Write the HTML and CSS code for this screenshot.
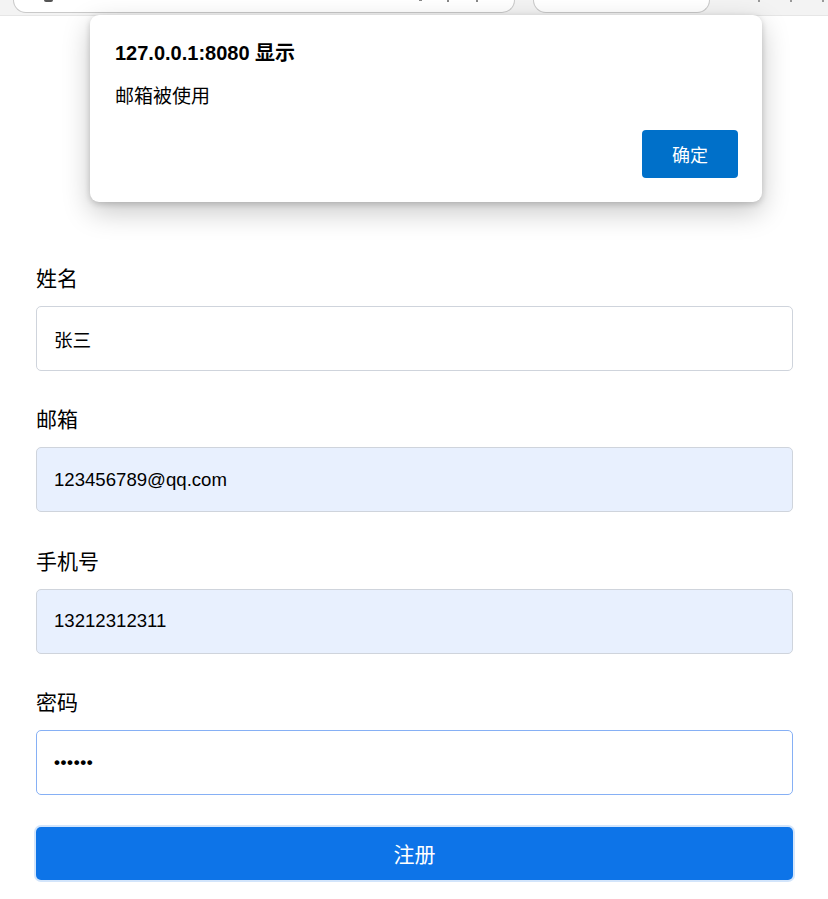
FILE: index.html
```html
<!DOCTYPE html>
<html lang="zh-CN">
<head>
<meta charset="utf-8">
<title>注册</title>
<link rel="stylesheet" href="styles.css">
</head>
<body>
<div class="chrome">
  <div class="pill pill-url">
    <span class="mark mark-left"></span>
    <span class="mark mark-a"></span>
    <span class="mark mark-b"></span>
    <span class="mark mark-c"></span>
  </div>
  <div class="pill pill-search"></div>
  <div class="chrome-icons">
    <span class="mark"></span><span class="mark"></span><span class="mark"></span>
  </div>
</div>

<div class="dialog" role="alertdialog">
  <div class="dialog-title">127.0.0.1:8080 显示</div>
  <div class="dialog-msg">邮箱被使用</div>
  <div class="dialog-actions">
    <button class="dialog-ok" type="button">确定</button>
  </div>
</div>

<form class="form">
  <div class="group">
    <label class="label">姓名</label>
    <div class="input">张三</div>
  </div>
  <div class="group">
    <label class="label">邮箱</label>
    <div class="input autofill">123456789@qq.com</div>
  </div>
  <div class="group">
    <label class="label">手机号</label>
    <div class="input autofill">13212312311</div>
  </div>
  <div class="group">
    <label class="label">密码</label>
    <div class="input focus password">••••••</div>
  </div>
  <button class="submit" type="button">注册</button>
</form>
</body>
</html>
```

FILE: styles.css
```css
* { box-sizing: border-box; }

html, body {
  margin: 0;
  padding: 0;
  background: #ffffff;
}

body {
  font-family: "Liberation Sans", Arial, "Noto Sans CJK SC", sans-serif;
  color: #000;
  width: 828px;
  height: 899px;
  overflow: hidden;
  position: relative;
}

/* browser chrome strip (cut off at top) */
.chrome {
  height: 16px;
  background: #f3f3f3;
  border-bottom: 1px solid #e6e6e6;
  display: flex;
  align-items: flex-start;
  padding-left: 13px;
  gap: 18px;
}

.pill {
  flex-shrink: 0;
  height: 13px;
  background: #fff;
  border: 1px solid #c9c9c9;
  border-top: none;
  border-radius: 0 0 14px 14px;
  position: relative;
}

.pill-url { width: 502px; }
.pill-search { width: 177px; }

.mark {
  display: block;
  position: absolute;
  top: 0;
  height: 2px;
  background: #6a6a6a;
}
.mark-left { left: 30px; width: 9px; height: 2px; border-radius: 0 0 4px 4px; background: #555; }
.mark-a { left: 405px; width: 3px; height: 1px; background: #888; }
.mark-b { left: 433px; width: 2px; height: 2px; background: #888; }
.mark-c { left: 462px; width: 2px; height: 2px; background: #888; }

.chrome-icons {
  display: flex;
  gap: 30px;
  margin-left: 30px;
}
.chrome-icons .mark {
  position: static;
  width: 2px;
  height: 2px;
  background: #999;
}

/* alert dialog overlay */
.dialog {
  position: absolute;
  left: 90px;
  top: 15px;
  width: 672px;
  height: 187px;
  background: #fff;
  border-radius: 9px;
  box-shadow: 0 10px 28px rgba(0, 0, 0, 0.22), 0 2px 6px rgba(0, 0, 0, 0.18);
  padding: 25px 24px 24px 25px;
  font-family: "Liberation Sans", Arial, "Noto Sans CJK SC", sans-serif;
}

.dialog-title {
  font-size: 20px;
  font-weight: bold;
  line-height: 26px;
  height: 26px;
}

.dialog-msg {
  font-family: "Noto Sans CJK SC", sans-serif;
  font-size: 19px;
  line-height: 26px;
  margin-top: 16px;
}

.dialog-actions {
  display: flex;
  justify-content: flex-end;
  margin-top: 22px;
}

.dialog-ok {
  width: 96px;
  height: 48px;
  border: none;
  border-radius: 4px;
  background: #0070c9;
  color: #fff;
  font-family: "Noto Sans CJK SC", sans-serif;
  font-size: 18px;
  padding: 0;
}

/* form */
.form {
  padding: 246px 35px 0 36px;
}

.group {
  margin-bottom: 32.4px;
}

.label {
  display: block;
  font-family: "Noto Sans CJK SC", sans-serif;
  font-size: 21px;
  line-height: 31px;
  margin-bottom: 13px;
  color: #000;
}

.input {
  height: 65px;
  border: 1px solid #cfd4dc;
  border-radius: 5px;
  background: #fff;
  padding: 0 17px;
  display: flex;
  align-items: center;
  font-family: "Liberation Sans", Arial, "Noto Sans CJK SC", sans-serif;
  font-size: 18.6px;
  color: #000;
}

.input.autofill {
  background: #e8f0fe;
}

.input.focus {
  border-color: #86b0f5;
}

.input.password {
  font-size: 17px;
  letter-spacing: 0.6px;
  font-weight: bold;
}

.submit {
  display: block;
  width: 100%;
  height: 53px;
  margin-top: -1px;
  border: none;
  border-radius: 5px;
  background: #0d74e8;
  color: #fff;
  font-family: "Noto Sans CJK SC", sans-serif;
  font-size: 21px;
  box-shadow: 0 0 0 2px #d3e5fb;
  padding: 0;
}
```
